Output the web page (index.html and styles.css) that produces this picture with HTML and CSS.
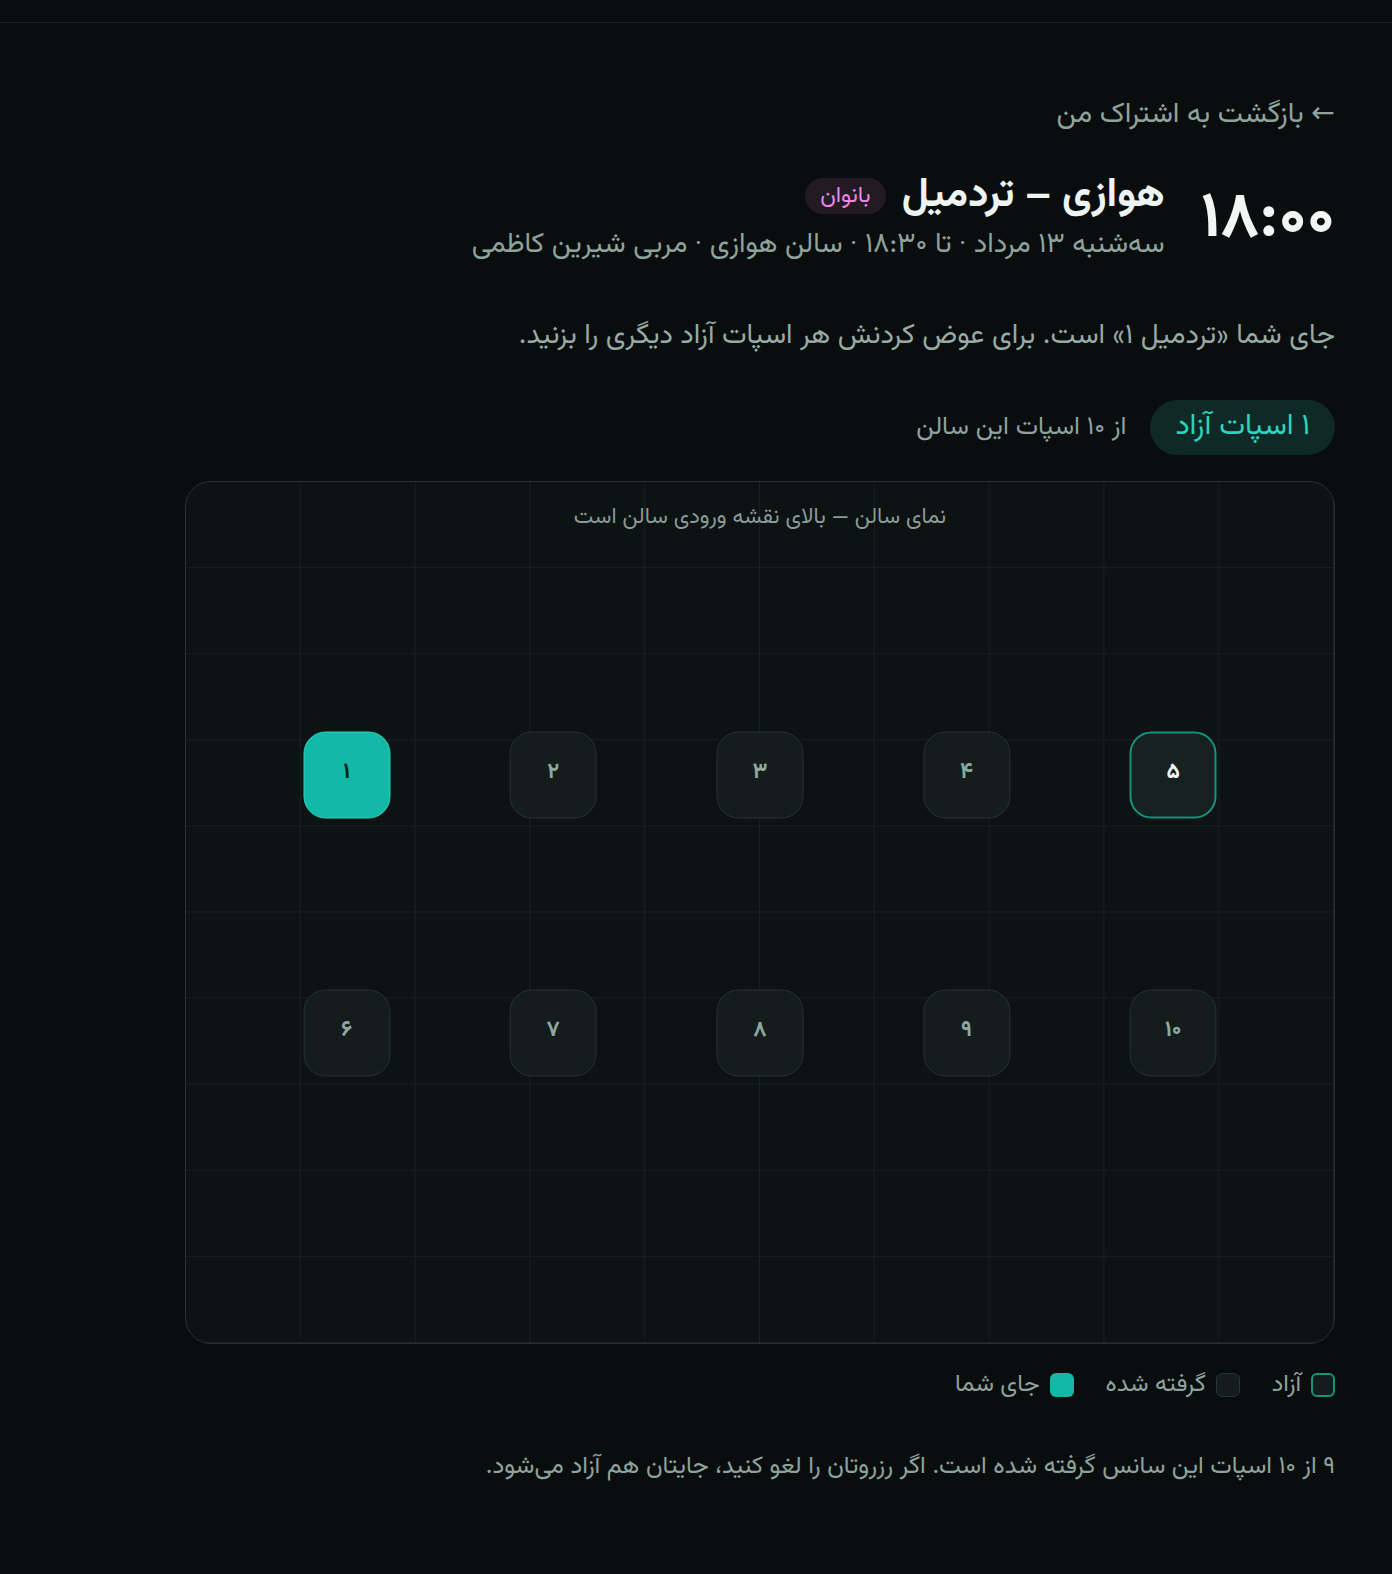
FILE: index.html
```html
<!DOCTYPE html>
<html lang="fa" dir="rtl">
<head>
<meta charset="utf-8">
<title>انتخاب اسپات</title>
<link rel="stylesheet" href="styles.css">
</head>
<body>
<header class="topbar"></header>
<main class="page">
  <a class="back" href="#">← بازگشت به اشتراک من</a>

  <section class="session">
    <div class="time">۱۸:۰۰</div>
    <div class="session-info">
      <div class="title-row">
        <h1 class="title">هوازی – تردمیل</h1>
        <span class="badge">بانوان</span>
      </div>
      <div class="meta">سه‌شنبه ۱۳ مرداد · تا ۱۸:۳۰ · سالن هوازی · مربی شیرین کاظمی</div>
    </div>
  </section>

  <p class="intro">جای شما «تردمیل ۱» است. برای عوض کردنش هر اسپات آزاد دیگری را بزنید.</p>

  <div class="stats">
    <span class="free-pill">۱ اسپات آزاد</span>
    <span class="stats-note">از ۱۰ اسپات این سالن</span>
  </div>

  <div class="map">
    <div class="map-caption">نمای سالن — بالای نقشه ورودی سالن است</div>
    <button class="spot mine" style="left:14%;top:34%">۱</button>
    <button class="spot taken" style="left:32%;top:34%">۲</button>
    <button class="spot taken" style="left:50%;top:34%">۳</button>
    <button class="spot taken" style="left:68%;top:34%">۴</button>
    <button class="spot free" style="left:86%;top:34%">۵</button>
    <button class="spot taken" style="left:14%;top:64%">۶</button>
    <button class="spot taken" style="left:32%;top:64%">۷</button>
    <button class="spot taken" style="left:50%;top:64%">۸</button>
    <button class="spot taken" style="left:68%;top:64%">۹</button>
    <button class="spot taken" style="left:86%;top:64%">۱۰</button>
  </div>

  <ul class="legend">
    <li><span class="sw sw-free"></span>آزاد</li>
    <li><span class="sw sw-taken"></span>گرفته شده</li>
    <li><span class="sw sw-mine"></span>جای شما</li>
  </ul>

  <p class="footnote">۹ از ۱۰ اسپات این سانس گرفته شده است. اگر رزروتان را لغو کنید، جایتان هم آزاد می‌شود.</p>
</main>
</body>
</html>
```

FILE: styles.css
```css
* { box-sizing: border-box; }
html, body { margin: 0; padding: 0; }
body {
  background: #090d0e;
  color: #e6efec;
  font-family: "Vazirmatn", "Noto Sans Arabic", "DejaVu Sans", sans-serif;
  min-height: 1574px;
}
.topbar {
  height: 23px;
  border-bottom: 1px solid #18221f;
}
.page {
  width: 1278px;
  margin: 0 auto;
  padding-top: 72px;
  display: flex;
  flex-direction: column;
  align-items: flex-start;
}
.back {
  color: #8fa39d;
  text-decoration: none;
  font-size: 28.4px;
  line-height: 40px;
}
.session {
  margin-top: 36px;
  display: flex;
  align-items: center;
  gap: 36px;
}
.time {
  font-size: 64px;
  font-weight: 700;
  letter-spacing: 1.5px;
  color: #f1f6f5;
  line-height: 1;
  padding-top: 2px;
}
.session-info { display: flex; flex-direction: column; }
.title-row { display: flex; align-items: center; gap: 16px; }
.title {
  margin: 0;
  font-size: 41px;
  line-height: 50px;
  font-weight: 700;
  color: #eef4f2;
}
.badge {
  background: #241a23;
  color: #ec88e4;
  font-size: 23px;
  line-height: 36px;
  padding: 0 15px;
  border-radius: 18px;
}
.meta {
  margin-top: 2px;
  font-size: 28px;
  line-height: 44px;
  color: #8fa39d;
}
.intro {
  margin: 47px 0 0;
  font-size: 28px;
  line-height: 44px;
  color: #97aaa4;
}
.stats {
  margin-top: 42px;
  display: flex;
  align-items: center;
  gap: 24px;
}
.free-pill {
  background: #0f2a26;
  color: #2dd4bf;
  font-size: 29.5px;
  line-height: 55px;
  padding: 0 25px;
  border-radius: 28px;
}
.stats-note {
  color: #8fa39d;
  font-size: 25.5px;
}
.map {
  position: relative;
  margin-top: 26px;
  width: 90%;
  aspect-ratio: 4 / 3;
  border: 1.5px solid #263436;
  border-radius: 26px;
  background-color: #0d1213;
  background-image:
    linear-gradient(to right, #18211f 1px, transparent 1px),
    linear-gradient(to bottom, #18211f 1px, transparent 1px);
  background-size: 10% 10%;
  background-position: -1px -1px;
  overflow: hidden;
}
.map-caption {
  text-align: center;
  color: #8a9c97;
  font-size: 22px;
  line-height: 32px;
  margin-top: 20px;
}
.spot {
  position: absolute;
  width: 87px;
  height: 87px;
  transform: translate(50%, -50%);
  margin-left: -87px;
  border-radius: 22px;
  font-family: inherit;
  font-size: 22px;
  font-weight: 700;
  cursor: pointer;
  display: flex;
  align-items: center;
  justify-content: center;
  padding: 0 0 6px;
}
.spot.taken {
  background: #141c1c;
  border: 1.5px solid #253335;
  color: #8ea8a1;
}
.spot.free {
  background: #162120;
  border: 2px solid #16927f;
  color: #f2f7f6;
}
.spot.mine {
  background: #14b8a6;
  border: 1.5px solid #2dd4bf;
  color: #052320;
}
.legend {
  list-style: none;
  margin: 23px 0 0;
  padding: 0;
  display: flex;
  gap: 32px;
  font-size: 24px;
  line-height: 36px;
  color: #8fa39d;
}
.legend li { display: flex; align-items: center; gap: 10px; }
.sw {
  width: 24px;
  height: 24px;
  border-radius: 6px;
  display: inline-block;
}
.sw-free { background: #141c1c; border: 2px solid #16927f; }
.sw-taken { background: #141c1c; border: 1.5px solid #253335; }
.sw-mine { background: #14b8a6; }
.footnote {
  margin: 46px 0 0;
  font-size: 24.5px;
  line-height: 36px;
  color: #8fa39d;
}
```
